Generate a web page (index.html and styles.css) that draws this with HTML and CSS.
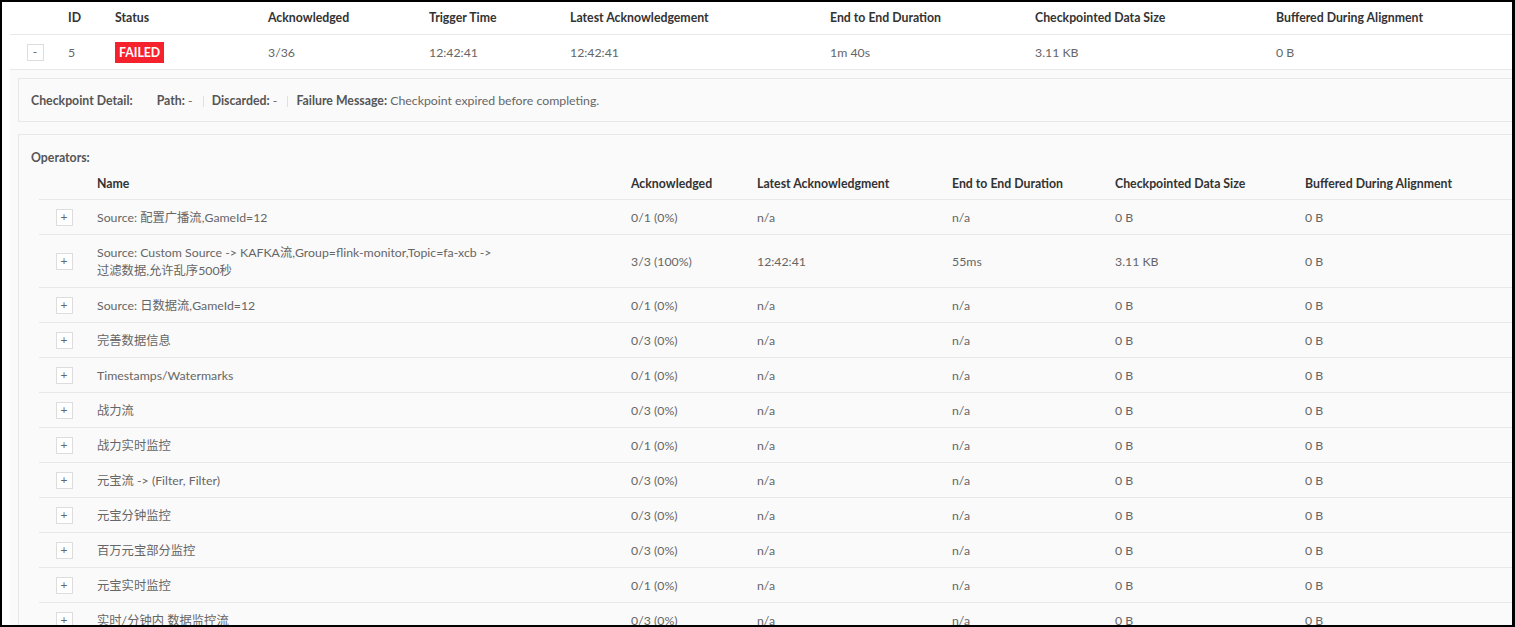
FILE: index.html
```html
<!DOCTYPE html>
<html>
<head>
<meta charset="utf-8">
<link rel="stylesheet" href="styles.css">
</head>
<body>
<div class="frame">
  <div class="page">
    <table class="tbl top">
      <colgroup>
        <col class="w50"><col style="width:47px"><col style="width:153px"><col style="width:161px"><col style="width:141px"><col style="width:260px"><col style="width:205px"><col style="width:241px"><col style="width:260px">
      </colgroup>
      <thead>
        <tr><th></th><th>ID</th><th>Status</th><th>Acknowledged</th><th>Trigger Time</th><th>Latest Acknowledgement</th><th>End to End Duration</th><th>Checkpointed Data Size</th><th>Buffered During Alignment</th></tr>
      </thead>
      <tbody>
        <tr class="main-row"><td class="btn-cell"><span class="tgl">-</span></td><td>5</td><td><span class="badge">FAILED</span></td><td>3/36</td><td>12:42:41</td><td>12:42:41</td><td>1m 40s</td><td>3.11 KB</td><td>0 B</td></tr>
      </tbody>
    </table>
    <div class="expanded">
      <div class="box detail">
        <span class="label">Checkpoint Detail:</span>
        <span class="item"><b>Path:</b> -</span><span class="divider"></span>
        <span class="item"><b>Discarded:</b> -</span><span class="divider"></span>
        <span class="item"><b>Failure Message:</b> Checkpoint expired before completing.</span>
      </div>
      <div class="box ops">
        <div class="label">Operators:</div>
        <table class="tbl inner">
          <colgroup>
            <col class="w50"><col style="width:534px"><col style="width:126px"><col style="width:195px"><col style="width:163px"><col style="width:190px"><col style="width:240px">
          </colgroup>
          <thead>
            <tr><th></th><th>Name</th><th>Acknowledged</th><th>Latest Acknowledgment</th><th>End to End Duration</th><th>Checkpointed Data Size</th><th>Buffered During Alignment</th></tr>
          </thead>
          <tbody>
            <tr><td class="btn-cell"><span class="tgl">+</span></td><td>Source: 配置广播流,GameId=12</td><td>0/1 (0%)</td><td>n/a</td><td>n/a</td><td>0 B</td><td>0 B</td></tr>
            <tr><td class="btn-cell"><span class="tgl">+</span></td><td>Source: Custom Source -&gt; KAFKA流,Group=flink-monitor,Topic=fa-xcb -&gt;<br>过滤数据,允许乱序500秒</td><td>3/3 (100%)</td><td>12:42:41</td><td>55ms</td><td>3.11 KB</td><td>0 B</td></tr>
            <tr><td class="btn-cell"><span class="tgl">+</span></td><td>Source: 日数据流,GameId=12</td><td>0/1 (0%)</td><td>n/a</td><td>n/a</td><td>0 B</td><td>0 B</td></tr>
            <tr><td class="btn-cell"><span class="tgl">+</span></td><td>完善数据信息</td><td>0/3 (0%)</td><td>n/a</td><td>n/a</td><td>0 B</td><td>0 B</td></tr>
            <tr><td class="btn-cell"><span class="tgl">+</span></td><td>Timestamps/Watermarks</td><td>0/1 (0%)</td><td>n/a</td><td>n/a</td><td>0 B</td><td>0 B</td></tr>
            <tr><td class="btn-cell"><span class="tgl">+</span></td><td>战力流</td><td>0/3 (0%)</td><td>n/a</td><td>n/a</td><td>0 B</td><td>0 B</td></tr>
            <tr><td class="btn-cell"><span class="tgl">+</span></td><td>战力实时监控</td><td>0/1 (0%)</td><td>n/a</td><td>n/a</td><td>0 B</td><td>0 B</td></tr>
            <tr><td class="btn-cell"><span class="tgl">+</span></td><td>元宝流 -&gt; (Filter, Filter)</td><td>0/3 (0%)</td><td>n/a</td><td>n/a</td><td>0 B</td><td>0 B</td></tr>
            <tr><td class="btn-cell"><span class="tgl">+</span></td><td>元宝分钟监控</td><td>0/3 (0%)</td><td>n/a</td><td>n/a</td><td>0 B</td><td>0 B</td></tr>
            <tr><td class="btn-cell"><span class="tgl">+</span></td><td>百万元宝部分监控</td><td>0/3 (0%)</td><td>n/a</td><td>n/a</td><td>0 B</td><td>0 B</td></tr>
            <tr><td class="btn-cell"><span class="tgl">+</span></td><td>元宝实时监控</td><td>0/1 (0%)</td><td>n/a</td><td>n/a</td><td>0 B</td><td>0 B</td></tr>
            <tr><td class="btn-cell"><span class="tgl">+</span></td><td>实时/分钟内 数据监控流</td><td>0/3 (0%)</td><td>n/a</td><td>n/a</td><td>0 B</td><td>0 B</td></tr>
          </tbody>
        </table>
      </div>
    </div>
  </div>
</div>
</body>
</html>
```
FILE: styles.css
```css
html, body {
  margin: 0;
  padding: 0;
  background: #000;
}
body {
  padding: 2px 3px 2px 2px;
  width: 1510px;
  height: 623px;
}
.frame {
  width: 1510px;
  height: 623px;
  background: #fff;
  overflow: hidden;
  font-family: Lato, "Noto Sans CJK SC", sans-serif;
  font-size: 12.3px;
  line-height: 18px;
  color: #666;
}
.page {
  width: 1560px;
  padding-left: 8px;
}
.tbl {
  border-collapse: collapse;
  table-layout: fixed;
  text-align: left;
}
.tbl .w50 { width: 50px; }
.tbl th {
  font-weight: 700;
  color: #333;
  padding: 7px 8px;
  border-bottom: 1px solid #e8e8e8;
  white-space: nowrap;
}
.tbl td {
  padding: 9px 8px 7px;
  border-bottom: 1px solid #e8e8e8;
  vertical-align: middle;
}
.tbl td.btn-cell {
  padding: 0;
  text-align: center;
}
.inner th { padding: 8px 8px 6px; }
.top { width: 1518px; background: #fff; }
.main-row { height: 35px; }
.main-row td { padding-top: 1px; padding-bottom: 0; }
.tgl {
  display: inline-block;
  box-sizing: border-box;
  width: 17px;
  height: 17px;
  border: 1px solid #ddd;
  background: #fff;
  line-height: 14px;
  text-align: center;
  font-size: 12px;
  color: #666;
  vertical-align: middle;
}
.badge {
  display: inline-block;
  background: #f5222d;
  color: #fff;
  font-weight: 700;
  padding: 0 4px;
  line-height: 21px;
  height: 21px;
  vertical-align: middle;
}
.expanded {
  background: #fafafa;
  padding: 8px 0 0 8px;
}
.box {
  border: 1px solid #e8e8e8;
  background: #fafafa;
  padding: 12px;
}
.detail {
  display: flex;
  align-items: center;
  color: #666;
  padding: 13px 12px 11px;
}
.label {
  font-weight: 700;
  color: #555;
}
.detail .label { margin-right: 24px; }
.detail b { color: #555; }
.divider {
  display: inline-block;
  width: 1px;
  height: 11px;
  background: #e0e0e0;
  margin: 0 8px 0 10px;
}
.ops {
  margin-top: 12px;
  padding: 13px 12px 0 12px;
}
.ops .label { line-height: 19px; }
.inner {
  margin-left: 8px;
  width: 1498px;
}
```
